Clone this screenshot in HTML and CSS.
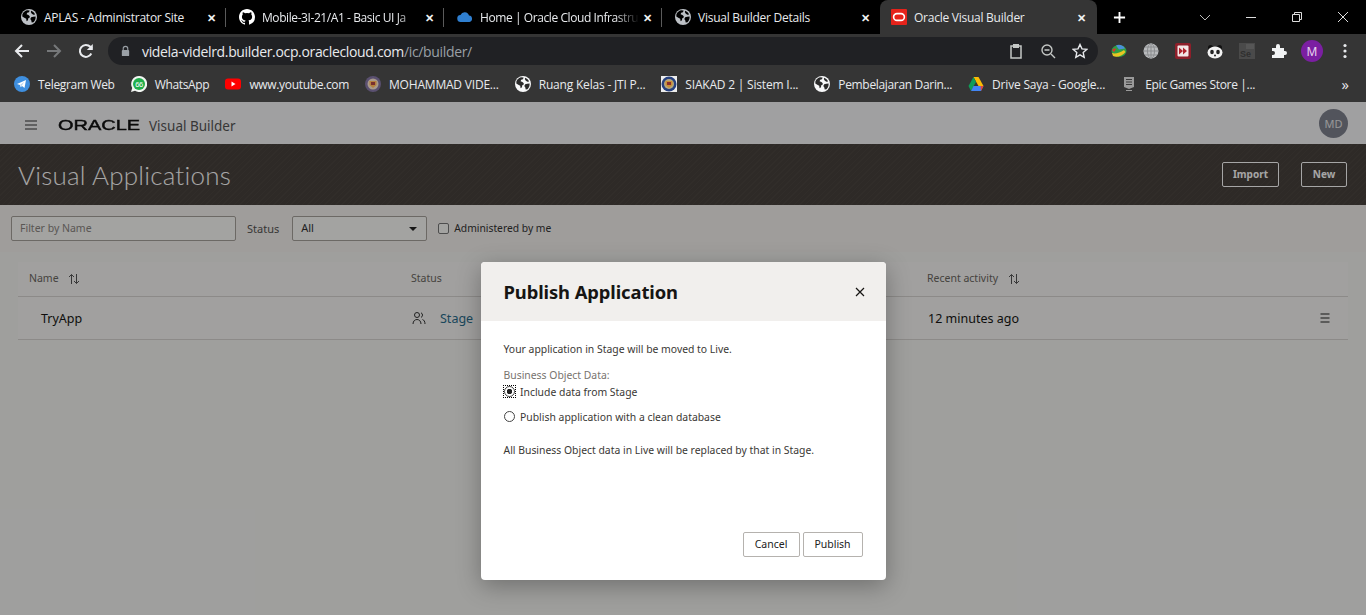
FILE: index.html
```html
<!DOCTYPE html>
<html lang="en">
<head>
    <meta charset="UTF-8">
    <meta name="viewport" content="width=device-width, initial-scale=1.0">
    <title>Oracle Visual Builder</title>
    <link rel="stylesheet" href="styles.css">
</head>
<body>
    <svg class="defs" aria-hidden="true">
        <symbol id="land" viewBox="0 0 16 16">
            <path d="M1.4 5.2C2.3 3.3 4 1.9 6 1.3L8.6 1.5 8 3.2 6.2 3.8 5.6 5.2 7.4 6 8.8 7.3 8.4 8.9 7.2 9.3 7 11.3 5.6 12.3 5.2 9.8 3.3 8.7 1.3 7.6zM10.3 1.7C12 2.4 13.4 3.7 14.1 5.4L12.3 5.8 10.6 4.5 9.8 3zM14.6 7.5C14.8 9.8 14 11.9 12.5 13.3L10.7 13.4 10.3 11.4 9.3 10 10.2 8.3 12.2 7.8z"/>
        </symbol>
    </svg>

    <!-- browser chrome -->
    <div class="tabstrip">
        <div class="tab">
            <svg class="fav globe" viewBox="0 0 16 16"><circle cx="8" cy="8" r="8" fill="#bdc1c6"/><use href="#land" fill="#000"/></svg>
            <span class="tab-title">APLAS - Administrator Site</span>
            <span class="tab-close">✕</span>
        </div>
        <div class="tab">
            <svg class="fav" viewBox="0 0 16 16"><path fill="#fff" d="M8 0C3.58 0 0 3.58 0 8c0 3.54 2.29 6.53 5.47 7.59.4.07.55-.17.55-.38v-1.34c-2.23.48-2.69-1.07-2.69-1.07-.36-.92-.89-1.17-.89-1.17-.73-.5.05-.49.05-.49.8.06 1.23.83 1.23.83.71 1.22 1.87.87 2.33.66.07-.52.28-.87.51-1.07-1.78-.2-3.64-.89-3.64-3.95 0-.87.31-1.59.82-2.15-.08-.2-.36-1.02.08-2.12 0 0 .67-.21 2.2.82a7.7 7.7 0 0 1 4 0c1.53-1.04 2.2-.82 2.2-.82.44 1.1.16 1.92.08 2.12.51.56.82 1.27.82 2.15 0 3.07-1.87 3.75-3.65 3.95.29.25.54.73.54 1.48v2.2c0 .21.15.46.55.38A8 8 0 0 0 16 8c0-4.42-3.58-8-8-8z"/></svg>
            <span class="tab-title fade">Mobile-3I-21/A1 - Basic UI Ja</span>
            <span class="tab-close">✕</span>
        </div>
        <div class="tab">
            <svg class="fav" viewBox="0 0 16 16"><path fill="#2f7fd0" d="M4 13a3.5 3.5 0 0 1-.5-7A4.5 4.5 0 0 1 12 6.5 3.3 3.3 0 0 1 12.5 13z"/></svg>
            <span class="tab-title fade">Home | Oracle Cloud Infrastru</span>
            <span class="tab-close">✕</span>
        </div>
        <div class="tab tab-last">
            <svg class="fav globe" viewBox="0 0 16 16"><circle cx="8" cy="8" r="8" fill="#bdc1c6"/><use href="#land" fill="#000"/></svg>
            <span class="tab-title">Visual Builder Details</span>
            <span class="tab-close">✕</span>
        </div>
        <div class="tab tab-active">
            <svg class="fav" viewBox="0 0 16 16"><rect width="16" height="16" rx="1" fill="#e5231b"/><rect x="2.6" y="4.6" width="10.8" height="6.8" rx="3.4" fill="none" stroke="#fff" stroke-width="1.6"/></svg>
            <span class="tab-title">Oracle Visual Builder</span>
            <span class="tab-close">✕</span>
        </div>
        <svg class="tab-new" viewBox="0 0 14 14"><path d="M7 1v12M1 7h12" stroke="#fff" stroke-width="2"/></svg>
        <div class="win-controls">
            <svg viewBox="0 0 12 12"><path d="M1 4l5 5 5-5" fill="none" stroke="#bbb"/></svg>
            <svg viewBox="0 0 12 12"><path d="M1 6.5h10" stroke="#ddd"/></svg>
            <svg viewBox="0 0 12 12"><path d="M1.5 3.5h7v7h-7zM3.5 3.5v-2h7v7h-2" fill="none" stroke="#ddd"/></svg>
            <svg viewBox="0 0 12 12"><path d="M1 1l10 10M11 1L1 11" stroke="#ddd"/></svg>
        </div>
    </div>

    <div class="toolbar">
        <svg class="nav-icon" viewBox="0 0 16 16"><path d="M15 8H2M8 2L2 8l6 6" fill="none" stroke="#e8eaed" stroke-width="2"/></svg>
        <svg class="nav-icon" viewBox="0 0 16 16"><path d="M1 8h13M8 2l6 6-6 6" fill="none" stroke="#76787a" stroke-width="2"/></svg>
        <svg class="nav-icon" viewBox="0 0 16 16"><path d="M13.3 10.5A6 6 0 1 1 12.3 3.8L14 5.5" fill="none" stroke="#e8eaed" stroke-width="2"/><path d="M14.8 1v6h-6z" fill="#e8eaed"/></svg>
        <div class="omnibox">
            <svg class="lock" viewBox="0 0 12 12"><path d="M3.5 5V3.5a2.5 2.5 0 0 1 5 0V5" fill="none" stroke="#9aa0a6" stroke-width="1.2"/><rect x="2" y="5" width="8" height="6.5" rx="1" fill="#9aa0a6"/></svg>
            <span class="url">videla-videlrd.builder.ocp.oraclecloud.com<span class="url-path">/ic/builder/</span></span>
            <svg class="omni-icon" viewBox="0 0 16 16"><path d="M5 3H3v12h10V3h-2" fill="none" stroke="#c4c7c5" stroke-width="1.5"/><rect x="5" y="1" width="6" height="4" fill="#c4c7c5"/></svg>
            <svg class="omni-icon" viewBox="0 0 16 16"><circle cx="7" cy="7" r="5" fill="none" stroke="#c4c7c5" stroke-width="1.4"/><path d="M11 11l4 4M4.5 7h5" stroke="#c4c7c5" stroke-width="1.4"/></svg>
            <svg class="omni-icon" viewBox="0 0 16 16"><path d="M8 1.5l2 4.4 4.7.5-3.500 3.2 1 4.7L8 11.900l-4.200 2.400 1-4.700L1.300 6.400 6 5.900z" fill="none" stroke="#e8eaed" stroke-width="1.4"/></svg>
        </div>
        <div class="extensions">
            <svg viewBox="0 0 16 16"><ellipse cx="8" cy="8" rx="7.5" ry="6" fill="#2f9e44"/><path d="M5 2.5c3-1.500 7-.5 9 3l-6 1z" fill="#4a90d9"/><path d="M1 10c3 1 8 0 12-3l1.500 2c-3 4-9 6-12.500 4z" fill="#e8c523"/><path d="M1 7c1-1 3-2 4-1l-2 3z" fill="#d9342b"/></svg>
            <svg viewBox="0 0 16 16"><circle cx="8" cy="8" r="7.5" fill="#b9bbbd"/><path d="M.5 8h15M8 .5v15M2 4h12M2 12h12" stroke="#8b8d8f"/><ellipse cx="8" cy="8" rx="3.5" ry="7.5" fill="none" stroke="#8b8d8f"/></svg>
            <svg viewBox="0 0 16 16"><rect width="16" height="16" rx="2" fill="#8e1f2a"/><rect x="2.5" y="2.5" width="11" height="11" rx="1" fill="#f4e6e6"/><path d="M4 4.5l4 3.500-4 3.500zM8 4.500l4 3.500-4 3.500z" fill="#b0232c"/></svg>
            <svg viewBox="0 0 16 16"><circle cx="3.5" cy="4.5" r="2.5" fill="#111"/><circle cx="12.5" cy="4.5" r="2.5" fill="#111"/><ellipse cx="8" cy="9.5" rx="7.5" ry="6" fill="#f2f2f2"/><ellipse cx="5" cy="9" rx="1.8" ry="2.3" fill="#222"/><ellipse cx="11" cy="9" rx="1.8" ry="2.3" fill="#222"/><circle cx="8" cy="12.5" r="1" fill="#222"/></svg>
            <svg viewBox="0 0 16 16"><rect width="16" height="16" fill="#4a4a4a"/><path d="M7 1h8v5H7z" fill="#565656"/><text x="1" y="14" font-size="9" font-family="Liberation Sans, sans-serif" font-weight="700" fill="#2f2f2f">Se</text></svg>
            <svg viewBox="0 0 16 16"><path d="M1 5h4V3a2 2 0 0 1 4 0v2h4v3h1a2 2 0 0 1 0 4h-1v3H1v-3h1a2 2 0 0 0 0-4H1z" fill="#f1f3f4"/></svg>
            <span class="profile">M</span>
            <svg viewBox="0 0 16 16"><circle cx="8" cy="2.5" r="1.6" fill="#e8eaed"/><circle cx="8" cy="8" r="1.6" fill="#e8eaed"/><circle cx="8" cy="13.5" r="1.6" fill="#e8eaed"/></svg>
        </div>
    </div>

    <div class="bookmarks">
        <div class="bm tight">
            <svg viewBox="0 0 16 16"><circle cx="8" cy="8" r="8" fill="#3f8fdf"/><path d="M3 8l9-4-1.5 8-2.5-2-1.3 1.3L6 9z" fill="#fff"/><path d="M6 9l4-3-2.3 4z" fill="#b8d6f2"/></svg>
            <span>Telegram Web</span>
        </div>
        <div class="bm tight">
            <svg viewBox="0 0 16 16"><path d="M8 0a8 8 0 0 0-6.8 12L0 16l4-1.2A8 8 0 1 0 8 0z" fill="#f2f6f2"/><circle cx="8" cy="8" r="6" fill="#1fae4b"/><text x="8" y="10.6" text-anchor="middle" font-size="7.5" font-family="Liberation Sans, sans-serif" fill="#fff">66</text></svg>
            <span>WhatsApp</span>
        </div>
        <div class="bm tight">
            <svg viewBox="0 0 16 16"><rect y="2.5" width="16" height="11" rx="3" fill="#f00"/><path d="M6.5 5.5l4 2.5-4 2.5z" fill="#fff"/></svg>
            <span>www.youtube.com</span>
        </div>
        <div class="bm">
            <svg viewBox="0 0 16 16"><circle cx="8" cy="8" r="8" fill="#5a5070"/><circle cx="8" cy="8" r="5.5" fill="#a99a8c"/><path d="M4.5 5h7v4l-3.5 3-3.5-3z" fill="#b5803d"/><rect x="6" y="6" width="4" height="3" fill="#7a2f2f"/></svg>
            <span>MOHAMMAD VIDE...</span>
        </div>
        <div class="bm">
            <svg viewBox="0 0 16 16"><circle cx="8" cy="8" r="8" fill="#f8f9fa"/><use href="#land" fill="#2b2b2b"/></svg>
            <span>Ruang Kelas - JTI P...</span>
        </div>
        <div class="bm">
            <svg viewBox="0 0 16 16"><rect width="16" height="16" fill="#ededed"/><circle cx="8" cy="8" r="7.5" fill="#27417f"/><circle cx="8" cy="8" r="5" fill="#b5a77f"/><path d="M4.5 5h7v4l-3.5 3-3.5-3z" fill="#c98f35"/><rect x="6" y="6" width="4" height="3" fill="#8a2f2f"/></svg>
            <span>SIAKAD 2 | Sistem I...</span>
        </div>
        <div class="bm tight">
            <svg viewBox="0 0 16 16"><circle cx="8" cy="8" r="8" fill="#f8f9fa"/><use href="#land" fill="#2b2b2b"/></svg>
            <span>Pembelajaran Darin...</span>
        </div>
        <div class="bm">
            <svg viewBox="0 0 16 16"><path d="M5.5 1h5l5 9h-5z" fill="#fbbc04"/><path d="M5.5 1L.5 10 3 15l5-9z" fill="#0f9d58"/><path d="M3 15h10l2.500-5h-10z" fill="#4285f4"/><path d="M13 15l2.500-5h-3z" fill="#ea4335"/></svg>
            <span>Drive Saya - Google...</span>
        </div>
        <div class="bm tight">
            <svg viewBox="0 0 16 16"><path d="M3 1h10v10l-5 2-5-2z" fill="#9a9a9a"/><path d="M5 3.5h6M5 6h6M5 8.500h6" stroke="#3a3a3a"/><path d="M5 14.500h6" stroke="#9a9a9a"/></svg>
            <span>Epic Games Store |...</span>
        </div>
        <span class="bm-more">»</span>
    </div>

    <!-- application -->
    <div class="app">
        <header class="app-bar">
            <svg class="hamburger" viewBox="0 0 14 10"><path d="M1 1h12M1 5h12M1 9h12" stroke="#333" stroke-width="1.2"/></svg>
            <span class="oracle-logo">ORACLE</span>
            <span class="product">Visual Builder</span>
            <span class="avatar">MD</span>
        </header>

        <section class="banner">
            <h1>Visual Applications</h1>
            <div class="banner-actions">
                <button class="btn-outline">Import</button>
                <button class="btn-outline">New</button>
            </div>
        </section>

        <section class="filters">
            <div class="filter-input">Filter by Name</div>
            <span class="filter-label">Status</span>
            <div class="filter-select"><span>All</span><i class="caret"></i></div>
            <label class="filter-check"><i class="checkbox"></i><span>Administered by me</span></label>
        </section>

        <section class="table">
            <div class="row row-head">
                <div class="col-name"><span>Name</span><svg class="sort" viewBox="0 0 12 12"><path d="M3.5 11V1.5M1 4l2.5-2.5L6 4M8.5 1v9.5M6 8l2.5 2.5L11 8" fill="none" stroke="#555"/></svg></div>
                <div class="col-status"><span>Status</span></div>
                <div class="col-activity"><span>Recent activity</span><svg class="sort" viewBox="0 0 12 12"><path d="M3.5 11V1.5M1 4l2.5-2.5L6 4M8.5 1v9.5M6 8l2.5 2.5L11 8" fill="none" stroke="#555"/></svg></div>
            </div>
            <div class="row row-data">
                <div class="col-name app-name">TryApp</div>
                <div class="col-status">
                    <svg class="people" viewBox="0 0 14 14"><circle cx="5" cy="4" r="2.5" fill="none" stroke="#333"/><path d="M1 13c0-6 8-6 8 0M9 1.8a2.500 2.500 0 0 1 0 4.600M10.500 8.500c1.500.5 2.500 2 2.500 4.500" fill="none" stroke="#333"/></svg>
                    <a class="stage-link">Stage</a>
                </div>
                <div class="col-activity">12 minutes ago</div>
                <svg class="row-menu" viewBox="0 0 10 10"><path d="M.5 1h9M.5 5h9M.5 9h9" stroke="#222" stroke-width="1.1"/></svg>
            </div>
        </section>

        <div class="overlay">
            <div class="dialog">
                <div class="dialog-head">
                    <h2>Publish Application</h2>
                    <svg class="dialog-close" viewBox="0 0 10 10"><path d="M1 1l8 8M9 1L1 9" stroke="#161513" stroke-width="1.2"/></svg>
                </div>
                <div class="dialog-body">
                    <p class="intro">Your application in Stage will be moved to Live.</p>
                    <div class="radio-label">Business Object Data:</div>
                    <div class="radio-row radio-focus"><i class="radio radio-on"></i>Include data from Stage</div>
                    <div class="radio-row"><i class="radio"></i>Publish application with a clean database</div>
                    <p class="note">All Business Object data in Live will be replaced by that in Stage.</p>
                </div>
                <div class="dialog-foot">
                    <button class="btn btn-cancel">Cancel</button>
                    <button class="btn btn-publish">Publish</button>
                </div>
            </div>
        </div>
    </div>
</body>
</html>
```

FILE: styles.css
```css
* {
    box-sizing: border-box;
}
html, body {
    height: 100%;
}
body {
    margin: 0;
    overflow: hidden;
    font-family: "Noto Sans", "Open Sans", sans-serif;
    background-color: #fff;
    display: flex;
    flex-direction: column;
}
.defs {
    display: none;
}

/* browser chrome */
.tabstrip {
    height: 34px;
    background-color: #000;
    display: flex;
    align-items: center;
    padding-left: 8px;
    color: #e8eaed;
    font-family: "Open Sans", sans-serif;
    font-size: 12px;
    flex: none;
}
.tab {
    width: 218px;
    height: 34px;
    display: flex;
    align-items: center;
    padding: 0 7px 0 13px;
    position: relative;
}
.tab::after {
    content: "";
    position: absolute;
    right: 0;
    top: 8px;
    bottom: 7px;
    width: 1px;
    background-color: #5a5a5a;
}
.tab-last::after,
.tab-active::after {
    display: none;
}
.tab-active {
    width: 217px;
    background-color: #353535;
    border-radius: 8px 8px 0 0;
    padding-left: 11px;
    padding-right: 8px;
}
.fav {
    width: 16px;
    height: 16px;
    flex: none;
    margin-right: 7px;
}
.tab-title {
    flex: 1;
    white-space: nowrap;
    letter-spacing: -0.25px;
    min-width: 0;
}
.fade {
    letter-spacing: -0.42px;
    -webkit-mask-image: linear-gradient(to right, #000 85%, transparent 100%);
    mask-image: linear-gradient(to right, #000 85%, transparent 100%);
}
.tab-close {
    font-size: 11px;
    font-weight: 700;
    width: 12px;
    margin-left: 4px;
    color: #f1f3f4;
}
.tab-new {
    width: 13px;
    height: 13px;
    margin-left: 16px;
}
.win-controls {
    margin-left: auto;
    display: flex;
    gap: 34px;
    padding-right: 17px;
}
.win-controls svg {
    width: 12px;
    height: 12px;
}

.toolbar {
    height: 34px;
    background-color: #353535;
    display: flex;
    align-items: center;
    padding-left: 14px;
    flex: none;
}
.nav-icon {
    width: 16px;
    height: 16px;
    margin-right: 16px;
}
.omnibox {
    width: 990px;
    height: 28px;
    margin-left: -2px;
    background-color: #202124;
    border-radius: 14px;
    display: flex;
    align-items: center;
    padding: 0 10px 0 12px;
    gap: 16px;
    color: #e8eaed;
    font-family: "Open Sans", sans-serif;
    font-size: 14px;
}
.lock {
    width: 11px;
    height: 12px;
    margin-right: -5px;
}
.url {
    flex: 1;
    letter-spacing: -0.34px;
}
.url-path {
    color: #9aa0a6;
}
.omni-icon {
    width: 16px;
    height: 16px;
}
.extensions {
    display: flex;
    align-items: center;
    gap: 16px;
    margin-left: 13px;
}
.extensions svg {
    width: 16px;
    height: 16px;
}
.profile {
    width: 22px;
    height: 22px;
    margin: 0 -2px;
    border-radius: 50%;
    background-color: #7b1fa2;
    color: #e8d4ef;
    font-size: 12px;
    display: flex;
    align-items: center;
    justify-content: center;
}

.bookmarks {
    height: 34px;
    background-color: #353535;
    display: flex;
    align-items: center;
    padding: 0 0 2px 14px;
    gap: 16px;
    color: #e8eaed;
    font-family: "Open Sans", sans-serif;
    font-size: 12px;
    flex: none;
}
.bm {
    display: flex;
    align-items: center;
    gap: 8px;
    white-space: nowrap;
    letter-spacing: -0.2px;
}
.tight {
    letter-spacing: -0.33px;
}
.bm svg {
    width: 16px;
    height: 16px;
    flex: none;
}
.bm-more {
    margin-left: auto;
    margin-right: 17px;
    font-size: 15px;
    line-height: 15px;
}

/* application */
.app {
    flex: 1;
    position: relative;
    background-color: #f5f4f2;
    display: flex;
    flex-direction: column;
    color: #161513;
}
.app-bar {
    height: 42px;
    background-color: #f6f6f8;
    display: flex;
    align-items: center;
    padding: 0 18px 0 24px;
    flex: none;
}
.hamburger {
    width: 14px;
    height: 10px;
    margin: 3px 20px 0 0;
}
.oracle-logo {
    font-family: "Liberation Sans", sans-serif;
    font-size: 15px;
    color: #111;
    -webkit-text-stroke: 0.45px #111;
    display: inline-block;
    width: 83px;
    margin-top: 2px;
    transform: scaleX(1.33);
    transform-origin: left center;
}
.product {
    margin: 5px 0 0 8px;
    font-size: 13.5px;
    color: #555;
}
.avatar {
    margin-left: auto;
    width: 29px;
    height: 29px;
    border-radius: 50%;
    background-color: #7e828e;
    color: #e8e8ea;
    font-size: 11px;
    display: flex;
    align-items: center;
    justify-content: center;
}
.banner {
    height: 61px;
    flex: none;
    display: flex;
    align-items: center;
    justify-content: space-between;
    padding: 0 19px 0 18px;
    background-color: #48413c;
    background-image: repeating-linear-gradient(135deg, rgba(255,255,255,0.025) 0 1px, transparent 1px 4px);
}
.banner h1 {
    margin: 0;
    font-family: Lato, "Noto Sans", sans-serif;
    font-weight: 300;
    font-size: 26px;
    color: #fff;
    letter-spacing: 0.2px;
}
.banner-actions {
    display: flex;
    gap: 22px;
}
.btn-outline {
    height: 25px;
    min-width: 46px;
    padding: 0 10px 2px;
    background: none;
    border: 1px solid #fff;
    border-radius: 2px;
    color: #fff;
    font-family: inherit;
    font-size: 10px;
    font-weight: 700;
}
.filters {
    height: 47px;
    flex: none;
    display: flex;
    align-items: center;
    padding-left: 11px;
    background-color: #f5f1ee;
    font-size: 11px;
    color: #555;
}
.filter-input {
    width: 225px;
    height: 25px;
    border: 1px solid #a7a29c;
    border-radius: 2px;
    background-color: #fbfaf8;
    padding-left: 8px;
    line-height: 23px;
    font-size: 10.5px;
    color: #8a8681;
}
.filter-label {
    margin: 0 13px 0 11px;
}
.filter-select {
    width: 135px;
    height: 25px;
    border: 1px solid #a7a29c;
    border-radius: 2px;
    background-color: #fbfaf8;
    padding: 0 9px 2px 8px;
    display: flex;
    align-items: center;
    justify-content: space-between;
    color: #333;
}
.caret {
    width: 0;
    height: 0;
    margin-top: 2px;
    border-left: 4px solid transparent;
    border-right: 4px solid transparent;
    border-top: 4px solid #222;
}
.filter-check {
    margin-left: 11px;
    display: flex;
    align-items: center;
    gap: 5px;
    color: #333;
    font-size: 10.3px;
}
.filter-check span {
    margin-top: -2px;
}
.checkbox {
    width: 11px;
    height: 11px;
    border: 1px solid #777;
    border-radius: 2px;
    background-color: #fbfaf8;
}
.table {
    margin: 10px 18px 0;
    background-color: #f7f6f4;
}
.row {
    display: flex;
    align-items: center;
    border-bottom: 1px solid #d8d5d1;
}
.row-head {
    height: 35px;
    font-size: 10.5px;
    color: #6b6762;
}
.row-head span {
    margin-top: -2px;
}
.row-data {
    height: 43px;
    font-size: 12.5px;
}
.col-name {
    width: 393px;
    padding-left: 11px;
    display: flex;
    align-items: center;
    gap: 9px;
}
.app-name {
    padding-left: 23px;
}
.col-status {
    width: 516px;
    display: flex;
    align-items: center;
    gap: 14px;
}
.row-data .col-status {
    padding-left: 1px;
}
.col-activity {
    display: flex;
    align-items: center;
    gap: 10px;
}
.row-data .col-activity {
    padding-left: 1px;
}
.sort {
    width: 12px;
    height: 12px;
}
.people {
    width: 14px;
    height: 14px;
}
.stage-link {
    color: #2a6d8c;
}
.row-menu {
    width: 10px;
    height: 10px;
    margin-left: auto;
    margin-right: 18px;
}

/* dialog */
.overlay {
    position: absolute;
    inset: 0;
    background-color: rgba(0, 0, 0, 0.35);
    display: flex;
    justify-content: center;
    align-items: flex-start;
    padding-top: 160px;
}
.dialog {
    width: 405px;
    height: 318px;
    background-color: #fff;
    border-radius: 4px;
    box-shadow: 0 6px 24px rgba(0, 0, 0, 0.3);
    display: flex;
    flex-direction: column;
    overflow: hidden;
}
.dialog-head {
    height: 59px;
    flex: none;
    background-color: #f1efed;
    display: flex;
    align-items: center;
    justify-content: space-between;
    padding: 0 21px 0 23px;
}
.dialog-head h2 {
    margin: 0;
    font-size: 18.4px;
    font-weight: 700;
    letter-spacing: -0.1px;
    color: #161513;
}
.dialog-close {
    width: 10px;
    height: 10px;
}
.dialog-body {
    flex: 1;
    padding: 20px 22px 0 23px;
    font-size: 10.4px;
    color: #3a3835;
}
.intro {
    margin: 0 0 12px;
    line-height: 16px;
}
.radio-label {
    line-height: 13px;
    margin-bottom: -1px;
    color: #77736e;
}
.radio-row {
    display: flex;
    align-items: center;
    gap: 5.5px;
    height: 25px;
}
.radio-focus {
    height: 21px;
    margin-bottom: 2px;
}
.radio {
    width: 11px;
    height: 11px;
    border: 1px solid #444;
    border-radius: 50%;
    flex: none;
    position: relative;
}
.radio-on {
    background: radial-gradient(circle, #222 0 2.5px, #fff 3px);
}
.radio-on::after {
    content: "";
    position: absolute;
    inset: -2px;
    border: 1px dotted #000;
}
.note {
    margin: 13px 0 0;
    line-height: 16px;
}
.dialog-foot {
    display: flex;
    justify-content: flex-end;
    gap: 3px;
    padding: 0 23px 23px;
}
.btn {
    height: 25px;
    padding: 0 0 2px;
    background-color: #fff;
    border: 1px solid #b5b2ae;
    border-radius: 2px;
    font-family: inherit;
    font-size: 10.5px;
    color: #222;
}
.btn-cancel {
    width: 57px;
}
.btn-publish {
    width: 60px;
}
```
